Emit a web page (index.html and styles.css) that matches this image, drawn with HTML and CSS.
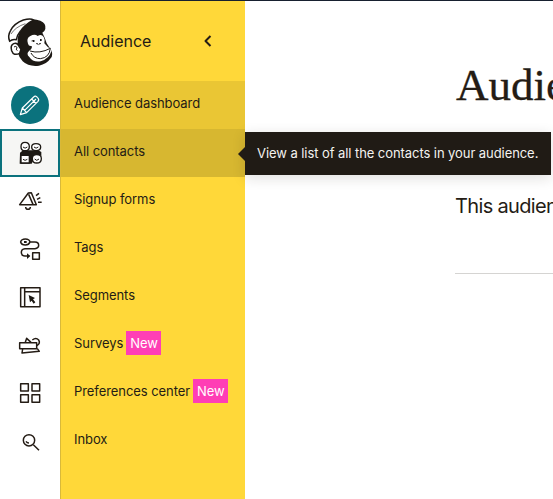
FILE: index.html
```
<!DOCTYPE html>
<html lang="en">
<head>
<meta charset="utf-8">
<title>Audience</title>
<link rel="stylesheet" href="styles.css">
</head>
<body>
<div class="app">
  <nav class="rail">
    <a class="logo" aria-label="Home">
      <svg width="60" height="72" viewBox="0 0 180 216">
        <path class="ink" d="M53 112C57 91 73 73 88 59C95 51 108 55 121 59Q139 66 136 84Q134 92 127 95Q135 110 140 127L153 146Q161 161 152 172Q140 190 117 194Q86 198 68 181Q57 170 53 152Z"/>
        <path class="paper line" d="M29 121Q22 104 32 88Q43 67 70 57Q92 51 101 57Q75 71 61 91Q51 103 49 116Q37 113 29 121Z"/>
        <path class="fine" d="M33 99Q46 78 76 68"/>
        <path class="paper line" d="M57 136Q52 124 41 128Q30 133 35 149Q41 166 59 157L63 145Z"/>
        <path class="thin" d="M42 138Q50 133 51 141Q46 144 52 149"/>
        <path class="paper" d="M84 128Q78 112 91 105Q104 98 113 105Q124 97 131 108Q136 117 133 127L144 139Q155 143 154 151Q148 173 122 181Q99 185 88 168Q77 158 88 149Q98 142 95 135Q86 137 84 128Z"/>
        <path class="fine" d="M94 120Q99 117 104 120M110 129Q116 133 122 128"/>
        <path class="ink" d="M98 117h5v6h-5zM120 114h5v6h-5zM109 126h4v3h-4zM118 126h4v3h-4z"/>
        <path class="thin" d="M90 150Q119 159 151 142Q148 170 121 173Q102 173 93 156"/>
      </svg>
    </a>
    <a class="rail-item" aria-label="Create">
      <span class="create">
        <svg width="38" height="38" viewBox="0 0 114 114">
          <path class="pencil" d="M28 86L34 66L68 33Q73 27 79 34Q86 40 81 46L47 80ZM34 66L47 80M41 73L75 39M62 39L75 52"/>
        </svg>
      </span>
    </a>
    <a class="rail-item rail-active" aria-label="Audience">
      <svg class="people" width="24" height="24" viewBox="0 0 72 72">
        <path class="ink" d="M3 35L12 28H58L67 33V46Q60 40 50 43L38 68H2Z"/>
        <path class="paper face" d="M6 17Q6 4 18 4Q31 4 31 17Q31 29 18 29Q6 29 6 17ZM38 18Q38 8 51 8Q65 8 65 18Q65 29 51 29Q38 29 38 18ZM6 43H31V66H6ZM40 53Q40 41 53 41Q67 41 67 53Q67 66 53 66Q40 66 40 53Z"/>
        <path class="smile" d="M12 18Q18 25 25 18M45 18Q51 25 58 18M12 55Q18 61 25 55M47 54Q53 62 60 54"/>
      </svg>
    </a>
    <a class="rail-item" aria-label="Campaigns">
      <svg class="glyph" width="42" height="42" viewBox="0 0 126 126">
        <path class="stroke" d="M55 39L29 74H79L64 38ZM56 43L69 73M47 81Q47 88 54 88Q61 88 61 81M78 47L87 40M81 58L91 53M84 67H95"/>
      </svg>
    </a>
    <a class="rail-item" aria-label="Automations">
      <svg class="glyph" width="42" height="42" viewBox="0 0 126 126">
        <path class="stroke" d="M32 42Q34 33 46 33Q58 33 60 42Q57 51 46 51Q34 51 32 42ZM60 42H75Q86 42 86 52Q86 61 75 62H45Q34 63 34 73Q34 84 45 84H58M68 74H88V94H68Z"/>
        <path class="ink" d="M42 39h8v6h-8zM51 76L61 84L51 93Z"/>
      </svg>
    </a>
    <a class="rail-item" aria-label="Website">
      <svg class="glyph" width="42" height="42" viewBox="0 0 126 126">
        <path class="stroke" d="M32 35H90V92H32ZM44 35V92M44 47H90"/>
        <path class="ink" d="M56 57L75 66L69 70L76 79L71 83L65 74L60 79Z"/>
      </svg>
    </a>
    <a class="rail-item" aria-label="Content studio">
      <svg class="glyph" width="42" height="42" viewBox="0 0 126 126">
        <path class="stroke" d="M29 56H80V74H29ZM46 55L50 43L63 55M38 75L36 87L88 82L82 74M67 48Q78 39 86 48Q92 58 81 65"/>
      </svg>
    </a>
    <a class="rail-item" aria-label="Integrations">
      <svg class="glyph" width="42" height="42" viewBox="0 0 126 126">
        <path class="stroke" d="M32 35H55V57H32ZM66 35H89V57H66ZM32 68H55V91H32ZM66 68H89V91H66Z"/>
      </svg>
    </a>
    <a class="rail-item" aria-label="Search">
      <svg class="glyph" width="42" height="42" viewBox="0 0 126 126">
        <circle class="stroke" cx="57" cy="61" r="17"/>
        <path class="stroke" d="M70 74L87 91M48 64Q51 69 57 69"/>
      </svg>
    </a>
  </nav>

  <aside class="panel">
    <header class="panel-head">
      <span>Audience</span>
      <svg width="10" height="14" viewBox="0 0 10 14"><path class="chevron" d="M7.5 2L2.5 7L7.5 12"/></svg>
    </header>
    <a class="link current">Audience dashboard</a>
    <a class="link hovered">All contacts
      <span class="tip">View a list of all the contacts in your audience.</span>
    </a>
    <a class="link">Signup forms</a>
    <a class="link">Tags</a>
    <a class="link">Segments</a>
    <a class="link">Surveys<span class="badge">New</span></a>
    <a class="link">Preferences center<span class="badge">New</span></a>
    <a class="link">Inbox</a>
  </aside>

  <main class="content">
    <h1>Audience</h1>
    <p>This audience has</p>
  </main>
</div>
</body>
</html>
```
FILE: styles.css
```
* { box-sizing: border-box; }
body {
  margin: 0;
  height: 499px;
  overflow: hidden;
  background: #fff;
  color: #241c15;
  font: 13px/20px Inter, "Liberation Sans", sans-serif;
}
.app {
  display: flex;
  height: 499px;
  border-top: 1px solid #17202f;
}
.rail { flex: 0 0 60px; }
.logo { display: flex; align-items: flex-start; height: 80px; }
.rail-item {
  display: flex;
  align-items: center;
  justify-content: center;
  height: 48px;
}
.rail-active {
  background: #f6f6f4;
  border: 2px solid #0b727d;
}
.create {
  width: 38px;
  height: 38px;
  border-radius: 50%;
  background: #0b727d;
}
.create svg { display: block; }
.glyph { margin-left: 2px; }
.people { margin-left: 1px; }
svg path, svg circle { fill: none; stroke-linejoin: round; }
svg .ink { fill: #1d1914; }
svg .paper { fill: #fff; }
.line { stroke: #1d1914; stroke-width: 4.5; }
.thin { stroke: #1d1914; stroke-width: 3; }
.fine { stroke: #1d1914; stroke-width: 1.8; }
.face { stroke: #1d1914; stroke-width: 4; }
.smile { stroke: #1d1914; stroke-width: 3; }
.stroke { stroke: #241c15; stroke-width: 4.5; }
.pencil { stroke: #fff; stroke-width: 3.6; }
.chevron { stroke: #241c15; stroke-width: 2; }

.panel {
  flex: 0 0 185px;
  background: #ffd839;
  border-left: 1px solid #d9b93a;
}
.panel-head {
  display: flex;
  align-items: center;
  justify-content: space-between;
  height: 80px;
  padding: 0 32px 0 19px;
  font-size: 16px;
}
.link {
  display: flex;
  align-items: center;
  height: 48px;
  padding: 0 0 4px 13px;
  white-space: nowrap;
  position: relative;
  letter-spacing: -.07px;
}
.current { background: #eac634; }
.hovered { background: #d7b730; }
.badge {
  width: 35px;
  height: 24px;
  margin-left: 3px;
  padding-left: 4px;
  line-height: 24px;
  background: #ff3eb5;
  color: #fff;
}
.tip {
  position: absolute;
  left: 184px;
  top: 3px;
  z-index: 1;
  width: 306px;
  height: 43px;
  padding-left: 12px;
  line-height: 43px;
  background: #201b15;
  color: #f4f2ef;
  box-shadow: 0 3px 14px rgba(36, 28, 21, .14);
}
.tip::before {
  content: "";
  position: absolute;
  left: -7px;
  top: 15px;
  border: solid transparent;
  border-width: 7px 7px 7px 0;
  border-right-color: #201b15;
}
.content {
  flex: 1;
  min-width: 0;
  padding: 60px 0 0 210px;
  overflow: hidden;
  white-space: nowrap;
}
h1 {
  margin: 0;
  font: 45px/49px "Liberation Serif", serif;
  height: 50px;
  padding-left: 1px;
  -webkit-text-stroke: .3px #241c15;
}
p {
  margin: 0;
  height: 163px;
  padding-top: 80px;
  border-bottom: 1px solid #d5d4d2;
  font-size: 20px;
  line-height: 30px;
  letter-spacing: -.65px;
}
```
